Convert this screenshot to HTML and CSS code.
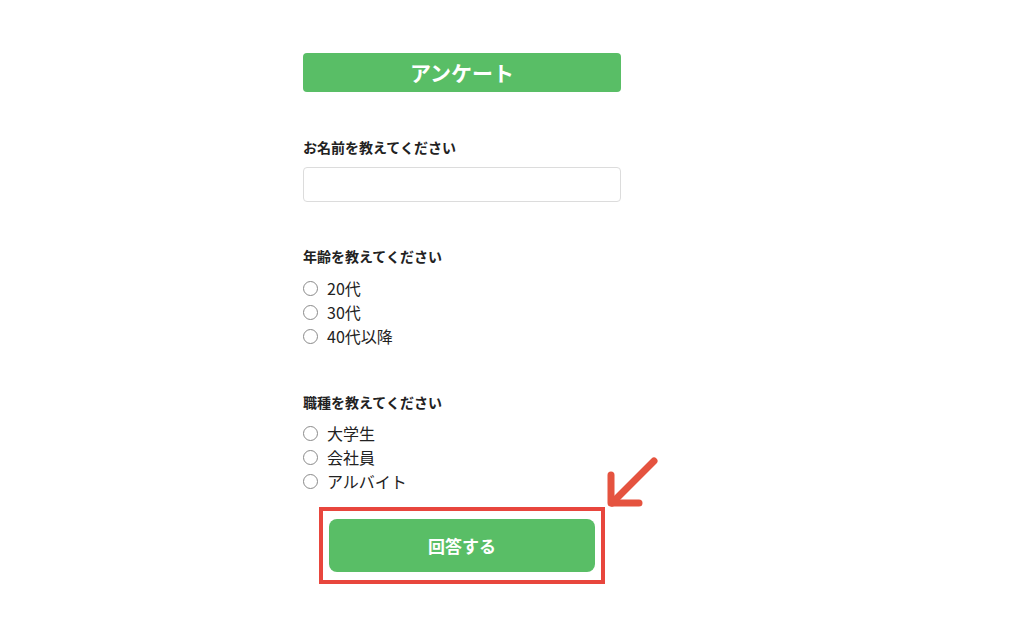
FILE: index.html
```html
<!DOCTYPE html>
<html lang="ja">
<head>
<meta charset="utf-8">
<link rel="stylesheet" href="styles.css">
</head>
<body>
<div class="page">
  <form class="survey">
    <h1 class="title">アンケート</h1>

    <p class="q q-first">お名前を教えてください</p>
    <input class="text-input" type="text">

    <p class="q">年齢を教えてください</p>
    <div class="options">
      <label class="opt"><span class="radio"></span>20代</label>
      <label class="opt"><span class="radio"></span>30代</label>
      <label class="opt"><span class="radio"></span>40代以降</label>
    </div>

    <p class="q">職種を教えてください</p>
    <div class="options options-2">
      <label class="opt"><span class="radio"></span>大学生</label>
      <label class="opt"><span class="radio"></span>会社員</label>
      <label class="opt"><span class="radio"></span>アルバイト</label>
    </div>

    <div class="highlight">
      <button class="submit" type="button">回答する</button>
    </div>
  </form>
  <svg class="arrow" width="60" height="60" viewBox="0 0 60 60">
    <g fill="none" stroke="#e5533f" stroke-width="7" stroke-linecap="round" stroke-linejoin="round">
      <path d="M50 6 L8 48"/>
      <path d="M7 20 V48 H35"/>
    </g>
  </svg>
</div>
</body>
</html>
```
FILE: styles.css
```css
* { box-sizing: border-box; }
html, body { margin: 0; padding: 0; background: #fff; }
body {
  font-family: "Noto Sans CJK JP", "Noto Sans", sans-serif;
  color: #222;
}
.page {
  position: relative;
  width: 1024px;
  height: 630px;
  padding-top: 53px;
  padding-left: 303px;
}
.survey { width: 318px; }
.title {
  margin: 0;
  height: 39px;
  line-height: 38px;
  background: #59be66;
  color: #fff;
  border-radius: 4px;
  text-align: center;
  font-size: 21px;
  font-weight: 700;
}
.q {
  margin: 44px 0 0;
  font-size: 14px;
  line-height: 20px;
  font-weight: 700;
  color: #222;
}
.q-first { margin-top: 45px; }
.text-input {
  display: block;
  margin-top: 10px;
  width: 318px;
  height: 35px;
  border: 1px solid #dcdcdc;
  border-radius: 4px;
  background: #fff;
}
.options {
  margin-top: 10px;
  display: flex;
  flex-direction: column;
}
.options-2 { margin-top: 9px; }
.opt {
  display: flex;
  align-items: center;
  height: 24px;
  font-size: 16px;
  color: #222;
}
.radio {
  width: 15px;
  height: 15px;
  border: 1px solid #8a8a8a;
  border-radius: 50%;
  margin-right: 9px;
  background: #fff;
}
.highlight {
  margin-top: 14px;
  margin-left: 16px;
  width: 286px;
  height: 77px;
  border: 4px solid #e8463d;
  padding: 8px 6px;
}
.submit {
  display: block;
  width: 266px;
  height: 53px;
  border: none;
  border-radius: 8px;
  background: #59be66;
  color: #fff;
  font-family: "Noto Sans CJK JP", "Noto Sans", sans-serif;
  font-size: 17px;
  font-weight: 700;
}
.arrow {
  position: absolute;
  left: 604px;
  top: 455px;
}
```
